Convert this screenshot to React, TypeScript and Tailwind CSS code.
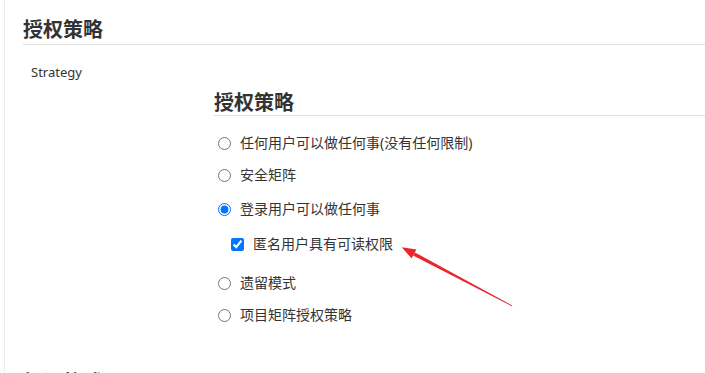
const OPTIONS = [
  { label: "任何用户可以做任何事(没有任何限制)", mt: "mt-[17px]" },
  { label: "安全矩阵", mt: "mt-[12px]" },
  { label: "登录用户可以做任何事", mt: "mt-[14px]", checked: true },
];

const MORE = [
  { label: "遗留模式", mt: "mt-[19px]" },
  { label: "项目矩阵授权策略", mt: "mt-[12px]" },
];

function Radio({ label, mt, checked }: { label: string; mt: string; checked?: boolean }) {
  return (
    <label className={`flex h-[20px] items-center ${mt} pl-[4px]`}>
      <input type="radio" name="strategy" defaultChecked={checked} className="h-[13px] w-[13px]" />
      <span className="ml-[9px] text-[14px] leading-[20px] text-[#333]">{label}</span>
    </label>
  );
}

export default function App() {
  return (
    <div
      className="relative flex h-[373px] w-[705px] overflow-hidden bg-white"
      style={{ fontFamily: '"Noto Sans", "Noto Sans CJK SC", sans-serif' }}
    >
      <div className="ml-[4px] w-px shrink-0 bg-[#e6edf3]" />

      <div className="flex-1 pl-[18px] pt-[15px]">
        {/* 섹션 제목 */}
        <h2 className="border-b border-[#dedede] text-[20px] font-bold leading-[29px] text-[#333]">
          授权策略
        </h2>

        <div className="mt-[18px] pl-[8px] text-[13px] leading-[18px] text-[#333]">Strategy</div>

        <div className="ml-[191px] mt-[10px]">
          <h3 className="border-b border-[#dedede] text-[20px] font-bold leading-[24px] text-[#333]">
            授权策略
          </h3>

          {OPTIONS.map((o) => (
            <Radio key={o.label} {...o} />
          ))}

          <label className="mt-[15px] flex h-[20px] items-center pl-[17px]">
            <input type="checkbox" defaultChecked className="h-[13px] w-[13px]" />
            <span className="ml-[9px] text-[14px] leading-[20px] text-[#333]">匿名用户具有可读权限</span>
          </label>

          {MORE.map((o) => (
            <Radio key={o.label} {...o} />
          ))}
        </div>

        <h2 className="mt-[43px] text-[20px] font-bold leading-[29px] text-[#333]">标记格式器</h2>
      </div>

      {/* 빨간 화살표 */}
      <svg className="pointer-events-none absolute left-0 top-0" width="705" height="373">
        <polygon
          points="401.7,247.3 416.4,249.6 411.6,258.4"
          fill="#e8262b"
        />
        <polygon
          points="414.9,252.4 413.1,255.6 511.9,306.3 512.3,305.6"
          fill="#e8262b"
        />
      </svg>
    </div>
  );
}
